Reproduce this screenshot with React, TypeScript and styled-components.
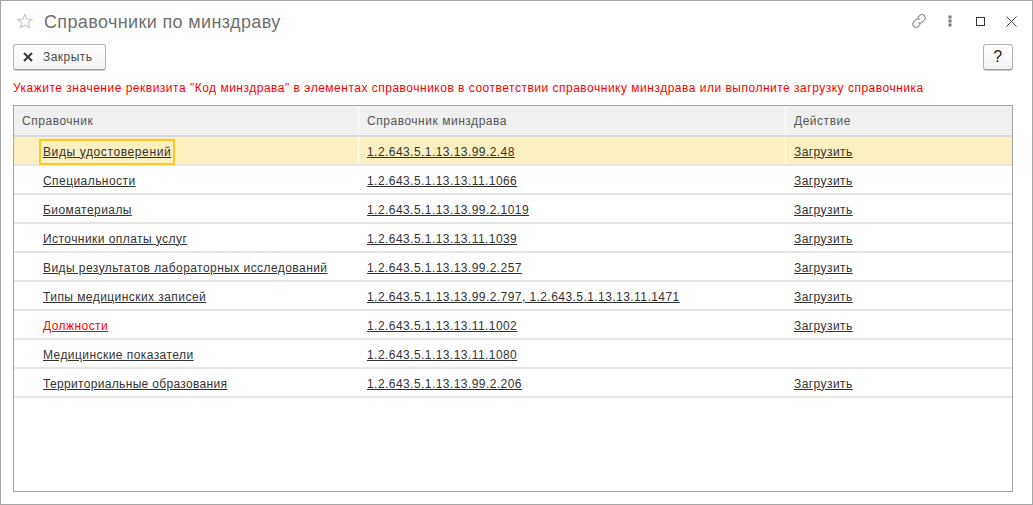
import React from "react";
import styled, { createGlobalStyle } from "styled-components";

const Global = createGlobalStyle`
  html, body { margin: 0; padding: 0; background: #fff; }
  body { font-family: "Liberation Sans", Arial, sans-serif; }
`;

const Windowed = styled.div`
  box-sizing: border-box;
  width: 1033px;
  height: 505px;
  border: 1px solid #a5a5a5;
  background: #fff;
  display: flex;
  flex-direction: column;
  padding: 0 19px 12px 12px;
`;

const TitleBar = styled.div`
  height: 43px;
  display: flex;
  align-items: center;
  flex: none;
`;

const StarSlot = styled.div`
  margin-left: 4px;
  width: 16px;
  height: 16px;
  margin-bottom: 3px;
  flex: none;
`;

const Title = styled.div`
  font-size: 18px;
  color: #6f6f6f;
  margin-left: 11px;
  letter-spacing: 0.37px;
  flex: 1;
  padding-bottom: 1px;
`;

const WindowTools = styled.div`
  display: flex;
  align-items: center;
  margin-right: -14px;
  margin-bottom: 3px;
  color: #555;
`;

const ToolSlot = styled.div`
  width: 31px;
  height: 22px;
  display: flex;
  align-items: center;
  justify-content: center;
`;

const ButtonRow = styled.div`
  display: flex;
  justify-content: space-between;
  height: 26px;
  flex: none;
`;

const ToolButton = styled.button<{ $wide?: boolean }>`
  box-sizing: border-box;
  width: ${(p) => (p.$wide ? "93px" : "30px")};
  height: 26px;
  border: 1px solid #b4b4b4;
  border-bottom-color: #9c9c9c;
  border-radius: 3px;
  background: linear-gradient(#ffffff, #f3f3f3);
  box-shadow: 0 1px 0 #c9c9c9;
  font: 12px "Liberation Sans", Arial, sans-serif;
  letter-spacing: 0.45px;
  color: #4a4a4a;
  display: flex;
  align-items: center;
  justify-content: ${(p) => (p.$wide ? "flex-start" : "center")};
  gap: 10px;
  padding: 0 0 0 ${(p) => (p.$wide ? "9px" : "0")};
`;

const Question = styled.span`
  font-size: 16px;
  color: #222;
`;

const Warning = styled.div`
  font-size: 12px;
  line-height: 14px;
  color: #ff0000;
  margin-top: 11px;
  height: 24px;
  flex: none;
  letter-spacing: 0.5px;
  white-space: nowrap;
`;

const Table = styled.div`
  flex: 1;
  border: 1px solid #a5a5a5;
  display: flex;
  flex-direction: column;
`;

const HeaderRow = styled.div`
  display: grid;
  grid-template-columns: 345px 427px 1fr;
  height: 29px;
  background: #f0f0f0;
  border-bottom: 2px solid #d9d9d9;
  flex: none;
`;

const HeaderCell = styled.div`
  display: flex;
  align-items: center;
  padding-left: 8px;
  font-size: 12px;
  letter-spacing: 0.53px;
  color: #555;
  border-right: 1px solid #fff;
  &:last-child { border-right: none; }
`;

const Row = styled.div<{ $active?: boolean }>`
  display: grid;
  grid-template-columns: 345px 427px 1fr;
  height: 29px;
  box-sizing: border-box;
  border-bottom: 2px solid #e6e6e6;
  background: ${(p) => (p.$active ? "#fdf0c0" : "#fff")};
`;

const Cell = styled.div<{ $first?: boolean; $active?: boolean }>`
  display: flex;
  align-items: center;
  padding-left: ${(p) => (p.$first ? "29px" : "8px")};
  border-right: ${(p) => (p.$active ? "1px solid #fff" : "none")};
  padding-top: 2px;
  min-width: 0;
  &:last-child { border-right: none; }
`;

const RowLink = styled.a<{ $red?: boolean; $focused?: boolean; $tight?: boolean }>`
  font-size: 12px;
  line-height: 14px;
  letter-spacing: ${(p) => (p.$focused ? "0.61px" : p.$tight ? "0.33px" : "0.44px")};
  color: ${(p) => (p.$red ? "#ff0000" : "#333")};
  text-decoration: underline;
  white-space: nowrap;
  ${(p) =>
    p.$focused
      ? `outline: 2px solid #fcc827; padding: 4px 2px; margin-left: -2px;`
      : ""}
`;

const Star = () => (
  <svg width="16" height="16" viewBox="0 0 18 18" fill="none" stroke="#c4c4c4" strokeWidth="1.2">
    <path d="M9 1.5l2.2 5.2 5.6.5-4.2 3.7 1.3 5.5L9 13.5l-4.9 2.9 1.3-5.5L1.2 7.2l5.6-.5z" />
  </svg>
);

const LinkIcon = () => (
  <svg width="16" height="16" viewBox="0 0 16 16" fill="none" stroke="#8a8a8a" strokeWidth="1.1">
    <path d="M6.7 4.6l2.2-2.2a2.7 2.7 0 0 1 3.9 0l.6.6a2.7 2.7 0 0 1 0 3.9l-2.5 2.5a2.7 2.7 0 0 1-3.8 0" />
    <path d="M9.3 11.4l-2.2 2.2a2.7 2.7 0 0 1-3.9 0l-.6-.6a2.7 2.7 0 0 1 0-3.9l2.5-2.5a2.7 2.7 0 0 1 3.8 0" />
  </svg>
);

const Dots = () => (
  <svg width="4" height="12" viewBox="0 0 4 12" fill="#7a7a7a">
    <rect x="0.5" y="0.5" width="3" height="3" />
    <rect x="0.5" y="4.5" width="3" height="3" />
    <rect x="0.5" y="8.5" width="3" height="3" />
  </svg>
);

const Maximize = () => (
  <svg width="9" height="9" viewBox="0 0 9 9" fill="none" stroke="#333" strokeWidth="1">
    <rect x="0.5" y="0.5" width="8" height="8" />
  </svg>
);

const CloseThin = () => (
  <svg width="11" height="11" viewBox="0 0 11 11" fill="none" stroke="#444" strokeWidth="1">
    <path d="M.5.5l10 10M10.5.5l-10 10" />
  </svg>
);

const CloseBold = () => (
  <svg width="10" height="10" viewBox="0 0 10 10" fill="none" stroke="#3a3a3a" strokeWidth="2">
    <path d="M1 1l8 8M9 1l-8 8" />
  </svg>
);

const rows = [
  { name: "Виды удостоверений", code: "1.2.643.5.1.13.13.99.2.48", load: true, active: true },
  { name: "Специальности", code: "1.2.643.5.1.13.13.11.1066", load: true },
  { name: "Биоматериалы", code: "1.2.643.5.1.13.13.99.2.1019", load: true },
  { name: "Источники оплаты услуг", code: "1.2.643.5.1.13.13.11.1039", load: true },
  { name: "Виды результатов лабораторных исследований", code: "1.2.643.5.1.13.13.99.2.257", load: true },
  { name: "Типы медицинских записей", code: "1.2.643.5.1.13.13.99.2.797, 1.2.643.5.1.13.13.11.1471", load: true },
  { name: "Должности", code: "1.2.643.5.1.13.13.11.1002", load: true, red: true },
  { name: "Медицинские показатели", code: "1.2.643.5.1.13.13.11.1080", load: false },
  { name: "Территориальные образования", code: "1.2.643.5.1.13.13.99.2.206", load: true, tight: true },
];

export default function App() {
  return (
    <>
      <Global />
      <Windowed>
        <TitleBar>
          <StarSlot><Star /></StarSlot>
          <Title>Справочники по минздраву</Title>
          <WindowTools>
            <ToolSlot><LinkIcon /></ToolSlot>
            <ToolSlot><Dots /></ToolSlot>
            <ToolSlot><Maximize /></ToolSlot>
            <ToolSlot><CloseThin /></ToolSlot>
          </WindowTools>
        </TitleBar>
        <ButtonRow>
          <ToolButton $wide><CloseBold />Закрыть</ToolButton>
          <ToolButton><Question>?</Question></ToolButton>
        </ButtonRow>
        <Warning>
          Укажите значение реквизита "Код минздрава" в элементах справочников в соответствии справочнику минздрава или выполните загрузку справочника
        </Warning>
        <Table>
          <HeaderRow>
            <HeaderCell>Справочник</HeaderCell>
            <HeaderCell>Справочник минздрава</HeaderCell>
            <HeaderCell>Действие</HeaderCell>
          </HeaderRow>
          {rows.map((r) => (
            <Row key={r.name} $active={r.active}>
              <Cell $first $active={r.active}>
                <RowLink $red={r.red} $focused={r.active} $tight={r.tight}>{r.name}</RowLink>
              </Cell>
              <Cell $active={r.active}><RowLink>{r.code}</RowLink></Cell>
              <Cell>{r.load && <RowLink>Загрузить</RowLink>}</Cell>
            </Row>
          ))}
        </Table>
      </Windowed>
    </>
  );
}
